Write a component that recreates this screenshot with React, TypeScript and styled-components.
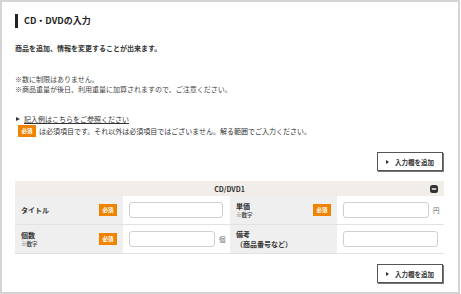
import React from 'react'
import styled, { createGlobalStyle } from 'styled-components'

const GlobalStyle = createGlobalStyle`
  body {
    margin: 0;
    font-family: 'Noto Sans CJK JP', 'Noto Sans', sans-serif;
    color: #333;
    background: #fff;
  }
`

const Frame = styled.div`
  width: 460px;
  height: 294px;
  box-sizing: border-box;
  border: 2px solid #d4d4d4;
  padding: 12px 14px 0 13px;
`

const Title = styled.h2`
  margin: 0;
  font-size: 9px;
  font-weight: bold;
  line-height: 14px;
  border-left: 3px solid #222;
  padding-left: 6px;
  color: #222;
`

const Lead = styled.p`
  margin: 15px 0 0;
  font-size: 7px;
  font-weight: bold;
  line-height: 10px;
`

const Notes = styled.div`
  margin-top: 21px;
  font-size: 7px;
  line-height: 10px;
  color: #444;
`

const ExampleLink = styled.a`
  display: flex;
  align-items: center;
  margin-top: 20px;
  font-size: 7px;
  line-height: 10px;
  color: #333;
  text-decoration: none;

  span {
    text-decoration: underline;
  }

  &::before {
    content: '';
    width: 0;
    height: 0;
    margin: 0 4px 0 1px;
    border-left: 4px solid #333;
    border-top: 2.5px solid transparent;
    border-bottom: 2.5px solid transparent;
  }
`

const RequiredNote = styled.div`
  display: flex;
  align-items: center;
  margin-top: 1px;
  padding-left: 3px;
  font-size: 7px;
  line-height: 12px;
  gap: 3px;
`

const Badge = styled.span`
  display: inline-flex;
  align-items: center;
  justify-content: center;
  width: 18px;
  height: 12px;
  background: #f08300;
  color: #fff;
  font-size: 5.5px;
  font-weight: bold;
  flex: none;
`

const ButtonRow = styled.div<{ $top: number }>`
  display: flex;
  justify-content: flex-end;
  margin-top: ${(p) => p.$top}px;
  padding-right: 1px;
`

const AddButton = styled.button`
  display: flex;
  align-items: center;
  justify-content: center;
  gap: 6px;
  width: 66px;
  height: 19px;
  padding: 0;
  background: #fff;
  border: 1px solid #555;
  box-shadow: 1px 1px 0 #777;
  font-family: inherit;
  font-size: 6.5px;
  font-weight: bold;
  color: #333;

  &::before {
    content: '';
    width: 0;
    height: 0;
    border-left: 3.5px solid #333;
    border-top: 2px solid transparent;
    border-bottom: 2px solid transparent;
  }
`

const Table = styled.div`
  margin-top: 10px;
  width: 429px;
  border-bottom: 1px solid #e2e2e2;
`

const TableHead = styled.div`
  position: relative;
  display: flex;
  align-items: center;
  justify-content: center;
  height: 15px;
  background: #f1eeea;
  font-size: 7px;
  font-weight: bold;
`

const Collapse = styled.svg`
  position: absolute;
  right: 6px;
  top: 3.5px;
`

const Row = styled.div`
  display: grid;
  grid-template-columns: 108px 107px 107px 107px;
  height: 28px;

  & + & {
    border-top: 1px solid #e2e2e2;
  }
`

const LabelCell = styled.div`
  display: flex;
  align-items: center;
  justify-content: space-between;
  padding: 0 6px;
  background: #efefef;
`

const LabelText = styled.div`
  font-size: 7px;
  font-weight: bold;
  line-height: 10px;
`

const Hint = styled.div`
  font-size: 5.5px;
  font-weight: bold;
  line-height: 9px;
  color: #555;
`

const InputCell = styled.div`
  display: flex;
  align-items: center;
  gap: 4px;
  padding: 0 6px;
  background: #fff;
  font-size: 6.5px;
  color: #666;
`

const TextInput = styled.input<{ $w: number }>`
  box-sizing: border-box;
  width: ${(p) => p.$w}px;
  height: 16px;
  border: 1px solid #d0d0d0;
  border-radius: 3px;
  padding: 0 4px;
  font-family: inherit;
  font-size: 7px;
`

export default function App() {
  return (
    <>
      <GlobalStyle />
      <Frame>
        <Title>CD・DVDの入力</Title>
        <Lead>商品を追加、情報を変更することが出来ます。</Lead>
        <Notes>
          ※数に制限はありません。
          <br />
          ※商品重量が後日、利用重量に加算されますので、ご注意ください。
        </Notes>
        <ExampleLink href="#">
          <span>記入例はこちらをご参照ください</span>
        </ExampleLink>
        <RequiredNote>
          <Badge>必須</Badge>
          は必須項目です。それ以外は必須項目ではございません。解る範囲でご入力ください。
        </RequiredNote>

        <ButtonRow $top={15}>
          <AddButton>入力欄を追加</AddButton>
        </ButtonRow>

        <Table>
          <TableHead>
            CD/DVD1
            <Collapse width="8" height="8" viewBox="0 0 8 8">
              <rect x="0" y="0" width="8" height="8" rx="2.5" fill="#333" />
              <rect x="1.8" y="3.3" width="4.4" height="1.4" fill="#fff" />
            </Collapse>
          </TableHead>
          <Row>
            <LabelCell>
              <LabelText>タイトル</LabelText>
              <Badge>必須</Badge>
            </LabelCell>
            <InputCell>
              <TextInput $w={94} />
            </InputCell>
            <LabelCell>
              <div>
                <LabelText>単価</LabelText>
                <Hint>※数字</Hint>
              </div>
              <Badge>必須</Badge>
            </LabelCell>
            <InputCell>
              <TextInput $w={86} />円
            </InputCell>
          </Row>
          <Row>
            <LabelCell>
              <div>
                <LabelText>個数</LabelText>
                <Hint>※数字</Hint>
              </div>
              <Badge>必須</Badge>
            </LabelCell>
            <InputCell>
              <TextInput $w={86} />個
            </InputCell>
            <LabelCell>
              <div>
                <LabelText>備考</LabelText>
                <LabelText>（商品番号など）</LabelText>
              </div>
            </LabelCell>
            <InputCell>
              <TextInput $w={95} />
            </InputCell>
          </Row>
        </Table>

        <ButtonRow $top={10}>
          <AddButton>入力欄を追加</AddButton>
        </ButtonRow>
      </Frame>
    </>
  )
}
